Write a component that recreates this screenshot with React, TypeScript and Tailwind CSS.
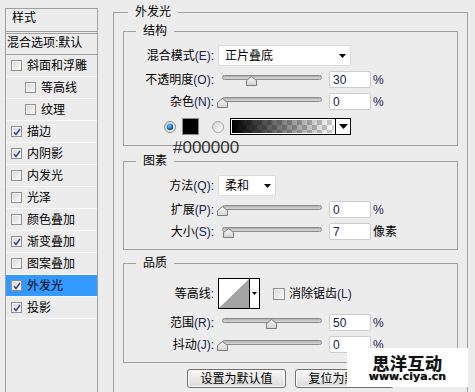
import React from "react";

type Item = { t: string; c: boolean; indent?: boolean; sel?: boolean };

const items: Item[] = [
  { t: "斜面和浮雕", c: false },
  { t: "等高线", c: false, indent: true },
  { t: "纹理", c: false, indent: true },
  { t: "描边", c: true },
  { t: "内阴影", c: true },
  { t: "内发光", c: false },
  { t: "光泽", c: false },
  { t: "颜色叠加", c: false },
  { t: "渐变叠加", c: true },
  { t: "图案叠加", c: false },
  { t: "外发光", c: true, sel: true },
  { t: "投影", c: true },
];

function CheckBox({ checked, big }: { checked: boolean; big?: boolean }) {
  return (
    <span
      className={`${big ? "w-[12px] h-[12px]" : "w-[11px] h-[11px]"} shrink-0 flex items-center justify-center border border-[#8f8f8f] bg-[linear-gradient(135deg,#d4d4d4,#fdfdfd)] shadow-[inset_0_0_0_1px_#f6f6f6]`}
    >
      {checked && (
        <svg width="8" height="8" viewBox="0 0 8 8">
          <path d="M1 4.2 L3 6.4 L7 1" stroke="#34479b" strokeWidth="1.6" fill="none" />
        </svg>
      )}
    </span>
  );
}

function Label({ zh, k }: { zh: string; k?: string }) {
  return (
    <div className="w-[90px] shrink-0 text-right whitespace-nowrap">
      {zh}
      {k && <span className="text-[#18214d]">({k})</span>}:
    </div>
  );
}

function Arrow({ w, h }: { w: number; h: number }) {
  return (
    <svg width={w} height={h} viewBox={`0 0 ${w} ${h}`} className="block">
      <path d={`M0 0 H${w} L${w / 2} ${h} Z`} fill="#000" />
    </svg>
  );
}

function Slider({ v }: { v: number }) {
  return (
    <div className="relative ml-[8px] w-[100px] h-[17px] shrink-0">
      <div className="mt-[4px] h-[5px] rounded-full border border-[#8a8a8a] bg-[linear-gradient(#b2b2b2,#d8d8d8)]" />
      <svg
        className="absolute top-[5px]"
        style={{ left: v * 0.99 - 5.5 }}
        width="11"
        height="10"
        viewBox="0 0 11 10"
      >
        <defs>
          <linearGradient id="thumbg" x1="0" y1="0" x2="0" y2="1">
            <stop offset="0" stopColor="#fbfbfb" />
            <stop offset="1" stopColor="#d2d2d2" />
          </linearGradient>
        </defs>
        <path d="M5.5 0.5 L10.5 4.5 V9.5 H0.5 V4.5 Z" fill="url(#thumbg)" stroke="#7c7c7c" />
      </svg>
    </div>
  );
}

function NumBox({ v }: { v: string }) {
  return (
    <div className="ml-[7px] w-[42px] h-[17px] shrink-0 bg-white border border-[#cdcdcd] rounded-[2px] pl-[3px] flex items-center text-[#18214d]">
      {v}
    </div>
  );
}

function Radio({ on }: { on: boolean }) {
  return (
    <svg width="12" height="12" viewBox="0 0 12 12" className="block shrink-0">
      <defs>
        <linearGradient id="radg" x1="0" y1="0" x2="1" y2="1">
          <stop offset="0" stopColor="#d0d0d0" />
          <stop offset="1" stopColor="#ffffff" />
        </linearGradient>
        <radialGradient id="dotg" cx="0.4" cy="0.35" r="0.7">
          <stop offset="0" stopColor="#7fd0ff" />
          <stop offset="0.5" stopColor="#1e7fd0" />
          <stop offset="1" stopColor="#0b3f7a" />
        </radialGradient>
      </defs>
      <circle cx="6" cy="6" r="5.5" fill="url(#radg)" stroke={on ? "#8a8a8a" : "#a6a6a6"} />
      {on && <circle cx="6" cy="6" r="3.2" fill="url(#dotg)" />}
    </svg>
  );
}

function Group({
  title,
  className,
  children,
}: {
  title: string;
  className: string;
  children: React.ReactNode;
}) {
  return (
    <fieldset className={`border border-[#a0a0a0] ${className}`}>
      <legend className="ml-[12px] px-[7px] leading-[16px]">{title}</legend>
      {children}
    </fieldset>
  );
}

function Btn({ children }: { children: React.ReactNode }) {
  return (
    <div className="w-[99px] h-[19px] border border-[#707070] rounded-[3px] bg-[linear-gradient(#f7f7f7,#dcdcdc)] shadow-[inset_0_0_0_1px_#fbfbfb] flex items-center justify-center">
      {children}
    </div>
  );
}

function LeftPanel() {
  return (
    <div className="ml-[5px] mt-[8px] w-[93px] shrink-0 border border-b-0 border-[#a0a0a0] flex flex-col">
      <div className="h-[22px] pl-[6px] pt-[1px]">样式</div>
      <div className="h-[3px] border-y border-[#a0a0a0]" />
      <div className="h-[21px] border-b border-[#a0a0a0] pl-[1px] pt-[1px] whitespace-nowrap">
        混合选项:默认
      </div>
      {items.map((it) => (
        <div
          key={it.t}
          className={`h-[22px] border-b border-[#fafafa] flex items-center ${it.sel ? "bg-[#3399ff]" : ""}`}
        >
          <span className={it.indent ? "ml-[19px]" : "ml-[5px]"}>
            <CheckBox checked={it.c} />
          </span>
          <span className="ml-[5px] whitespace-nowrap">{it.t}</span>
        </div>
      ))}
    </div>
  );
}

function RightPanel() {
  return (
    <div className="ml-[15px] w-[355px] shrink-0">
      <fieldset className="mt-[4px] border border-[#a0a0a0] px-[9px] pb-[24px]">
        <legend className="ml-[5px] px-[7px] leading-[16px]">外发光</legend>

        <Group title="结构" className="mt-[3px] pt-[6px] pb-[10px]">
          <div className="flex items-center h-[21px]">
            <Label zh="混合模式" k="E" />
            <div className="ml-[4px] w-[133px] h-[21px] shrink-0 bg-white border border-[#dcdcdc] rounded-[2px] flex items-center justify-between pl-[6px] pr-[4px]">
              <span>正片叠底</span>
              <Arrow w={7} h={4} />
            </div>
          </div>
          <div className="flex items-center h-[17px] mt-[5px]">
            <Label zh="不透明度" k="O" />
            <Slider v={30} />
            <NumBox v="30" />
            <span className="ml-[2px] text-[#18214d]">%</span>
          </div>
          <div className="flex items-center h-[17px] mt-[5px]">
            <Label zh="杂色" k="N" />
            <Slider v={0} />
            <NumBox v="0" />
            <span className="ml-[2px] text-[#18214d]">%</span>
          </div>
          <div className="flex items-center h-[17px] mt-[8px]">
            <span className="ml-[40px]">
              <Radio on={true} />
            </span>
            <div className="ml-[6px] w-[17px] h-[17px] shrink-0 border border-[#8c8c8c] bg-black" />
            <span className="ml-[13px]">
              <Radio on={false} />
            </span>
            <div className="ml-[6px] w-[121px] h-[17px] shrink-0 border border-black flex">
              <div className="flex-1 border border-white bg-[conic-gradient(#cdcdcd_25%,#ffffff_0_50%,#cdcdcd_0_75%,#ffffff_0)] bg-[length:10px_10px]">
                <div className="h-full bg-[linear-gradient(to_right,#000000,rgba(0,0,0,0))]" />
              </div>
              <div className="w-[15px] border-l border-black bg-white flex items-center justify-center">
                <Arrow w={9} h={5} />
              </div>
            </div>
          </div>
        </Group>

        <Group title="图素" className="mt-[7px] pt-[6px] pb-[9px]">
          <div className="flex items-center h-[21px]">
            <Label zh="方法" k="Q" />
            <div className="ml-[4px] w-[58px] h-[21px] shrink-0 bg-white border border-[#dcdcdc] rounded-[2px] flex items-center justify-between pl-[6px] pr-[4px]">
              <span>柔和</span>
              <Arrow w={7} h={4} />
            </div>
          </div>
          <div className="flex items-center h-[17px] mt-[5px]">
            <Label zh="扩展" k="P" />
            <Slider v={0} />
            <NumBox v="0" />
            <span className="ml-[2px] text-[#18214d]">%</span>
          </div>
          <div className="flex items-center h-[17px] mt-[5px]">
            <Label zh="大小" k="S" />
            <Slider v={7} />
            <NumBox v="7" />
            <span className="ml-[2px]">像素</span>
          </div>
        </Group>

        <Group title="品质" className="mt-[5px] pt-[7px] pb-[9px]">
          <div className="flex items-center h-[31px]">
            <Label zh="等高线" />
            <div className="ml-[4px] w-[42px] h-[31px] shrink-0 border border-black bg-white flex">
              <div className="w-[31px] h-full border-r border-black">
                <svg width="30" height="29" viewBox="0 0 30 29" className="block">
                  <path d="M0 29 L30 0 V29 Z" fill="#a3a3a3" />
                </svg>
              </div>
              <div className="flex-1 flex items-center justify-center">
                <Arrow w={5} h={3} />
              </div>
            </div>
            <span className="ml-[13px]">
              <CheckBox checked={false} big />
            </span>
            <span className="ml-[4px] whitespace-nowrap">
              消除锯齿<span className="text-[#18214d]">(L)</span>
            </span>
          </div>
          <div className="flex items-center h-[17px] mt-[5px]">
            <Label zh="范围" k="R" />
            <Slider v={50} />
            <NumBox v="50" />
            <span className="ml-[2px] text-[#18214d]">%</span>
          </div>
          <div className="flex items-center h-[17px] mt-[5px]">
            <Label zh="抖动" k="J" />
            <Slider v={0} />
            <NumBox v="0" />
            <span className="ml-[2px] text-[#18214d]">%</span>
          </div>
        </Group>

        <div className="flex mt-[6px] ml-[64px] gap-[9px]">
          <Btn>设置为默认值</Btn>
          <Btn>复位为默认值</Btn>
        </div>
      </fieldset>
    </div>
  );
}

function Watermark() {
  return (
    <div className="absolute left-[347px] top-[348px] w-[121px] h-[39px] bg-white flex flex-col items-center">
      <div className="mt-[7px] text-[17px] leading-[15px] font-bold tracking-[0.5px] text-[#111] font-['Noto_Sans_CJK_SC',sans-serif] [text-shadow:0_0_1px_#777]">
        思洋互动
      </div>
      <div className="mt-[1px] text-[11px] leading-[12px] font-bold text-[#111] font-['DejaVu_Sans',sans-serif] [text-shadow:0_0_1px_#777]">
        www.ciya.cn
      </div>
    </div>
  );
}

export default function App() {
  return (
    <div className="relative w-[475px] h-[392px] overflow-hidden bg-[#ececec] flex font-['Liberation_Sans','Noto_Sans_CJK_SC',sans-serif] text-[12px] leading-[16px] text-black">
      <LeftPanel />
      <RightPanel />
      <div className="absolute left-[173px] top-[139px] text-[17px] leading-[17px] text-[#333333] font-['Liberation_Sans',sans-serif]">
        #000000
      </div>
      <Watermark />
    </div>
  );
}
